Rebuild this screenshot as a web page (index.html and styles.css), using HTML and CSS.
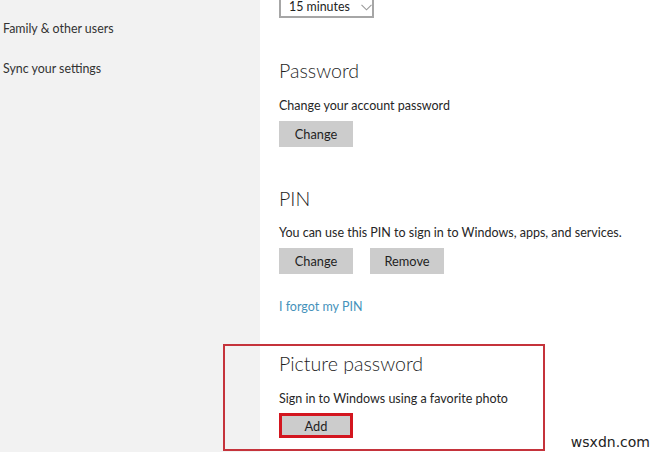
FILE: index.html
```html
<!DOCTYPE html>
<html lang="en">
<head>
<meta charset="utf-8">
<title>Sign-in options</title>
<link rel="stylesheet" href="styles.css">
</head>
<body>
<div class="page">
  <nav class="sidebar">
    <div class="nav-item">Family &amp; other users</div>
    <div class="nav-item">Sync your settings</div>
  </nav>
  <main class="main">
    <div class="dropdown">
      <span class="dropdown-value">15 minutes</span>
      <svg class="chevron" width="11" height="7" viewBox="0 0 11 7"><path d="M0.5 0.8 L5.5 5.8 L10.5 0.8" fill="none" stroke="#9a9a9a" stroke-width="1.1"/></svg>
    </div>

    <section class="section sec-password">
      <h2 class="heading">Password</h2>
      <p class="desc">Change your account password</p>
      <div class="buttons"><button class="btn">Change</button></div>
    </section>

    <section class="section sec-pin">
      <h2 class="heading">PIN</h2>
      <p class="desc">You can use this PIN to sign in to Windows, apps, and services.</p>
      <div class="buttons"><button class="btn">Change</button><button class="btn">Remove</button></div>
      <a class="link">I forgot my PIN</a>
    </section>

    <section class="section sec-picture">
      <div class="highlight-box"></div>
      <h2 class="heading">Picture password</h2>
      <p class="desc">Sign in to Windows using a favorite photo</p>
      <div class="buttons"><button class="btn btn-marked">Add</button></div>
    </section>
  </main>
  <div class="watermark">wsxdn.com</div>
</div>
</body>
</html>
```

FILE: styles.css
```css
* { box-sizing: border-box; }
html, body {
  margin: 0;
  padding: 0;
  width: 662px;
  height: 452px;
  overflow: hidden;
  background: #ffffff;
  font-family: "Lato", "Open Sans", sans-serif;
  color: #262626;
}
.page {
  position: relative;
  display: flex;
  width: 662px;
  height: 452px;
  overflow: hidden;
}
.sidebar {
  width: 260px;
  flex: 0 0 260px;
  background: #f2f2f2;
  padding: 19px 0 0 3px;
  display: flex;
  flex-direction: column;
  gap: 20px;
}
.nav-item {
  font-size: 12.4px;
  line-height: 20px;
  color: #333333;
}
.main {
  flex: 1;
  padding-left: 19px;
  display: flex;
  flex-direction: column;
  align-items: flex-start;
}
.dropdown {
  margin-top: -14px;
  width: 95px;
  height: 32px;
  border: 2px solid #a6a6a6;
  display: flex;
  align-items: center;
  gap: 11px;
  padding: 9px 0 0 8px;
  font-size: 12.4px;
  color: #222;
}
.chevron { margin-top: 1px; }
.section {
  position: relative;
  display: flex;
  flex-direction: column;
  align-items: flex-start;
}
.heading {
  margin: 0;
  font-weight: 300;
  font-size: 19.6px;
  line-height: 28px;
  color: #1f1f1f;
}
.desc {
  margin: 0;
  font-size: 12.5px;
  line-height: 20px;
  color: #262626;
}
.buttons {
  display: flex;
  gap: 17px;
}
.btn {
  width: 74px;
  height: 26px;
  border: 0;
  background: #cccccc;
  font-family: inherit;
  font-size: 12.8px;
  color: #1f1f1f;
  padding: 0;
}
.sec-password { margin-top: 39px; }
.sec-password .desc { margin-top: 11px; }
.sec-password .buttons { margin-top: 5px; }

.sec-pin { margin-top: 38px; }
.sec-pin .desc { margin-top: 10px; }
.sec-pin .buttons { margin-top: 5px; }
.link {
  margin-top: 23px;
  font-size: 12.5px;
  line-height: 20px;
  color: #4592bb;
}

.sec-picture { margin-top: 33px; }
.sec-picture .desc { margin-top: 11px; }
.sec-picture .buttons { margin-top: 4px; }
.btn-marked {
  height: 25px;
  border: 3px solid #d3161f;
}
.highlight-box {
  position: absolute;
  left: -56px;
  top: -6px;
  width: 322px;
  height: 107px;
  border: 2px solid #c5333b;
  pointer-events: none;
}
.watermark {
  position: absolute;
  right: 12px;
  bottom: 2px;
  font-family: "DejaVu Sans", sans-serif;
  font-size: 14px;
  color: #222;
}
```
